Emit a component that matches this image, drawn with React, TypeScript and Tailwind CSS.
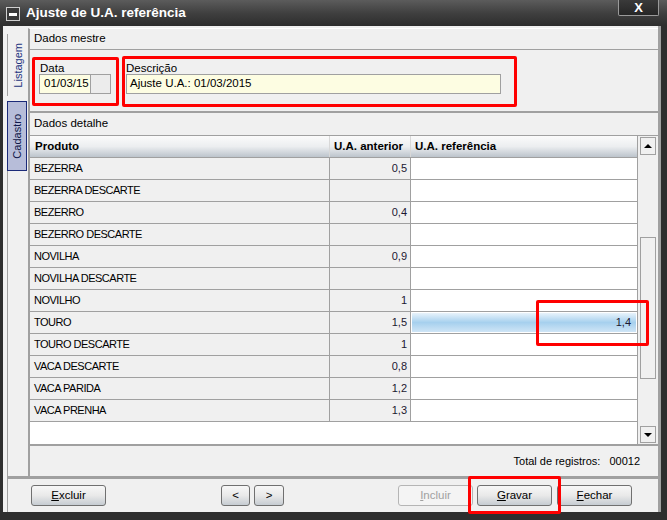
import React from 'react';

type Row = { produto: string; anterior: string; referencia: string };

const rows: Row[] = [
  { produto: 'BEZERRA', anterior: '0,5', referencia: '' },
  { produto: 'BEZERRA DESCARTE', anterior: '', referencia: '' },
  { produto: 'BEZERRO', anterior: '0,4', referencia: '' },
  { produto: 'BEZERRO DESCARTE', anterior: '', referencia: '' },
  { produto: 'NOVILHA', anterior: '0,9', referencia: '' },
  { produto: 'NOVILHA DESCARTE', anterior: '', referencia: '' },
  { produto: 'NOVILHO', anterior: '1', referencia: '' },
  { produto: 'TOURO', anterior: '1,5', referencia: '1,4' },
  { produto: 'TOURO DESCARTE', anterior: '1', referencia: '' },
  { produto: 'VACA DESCARTE', anterior: '0,8', referencia: '' },
  { produto: 'VACA PARIDA', anterior: '1,2', referencia: '' },
  { produto: 'VACA PRENHA', anterior: '1,3', referencia: '' },
];

const Btn = ({ label, u, rest, width, disabled, className }: { label?: string; u?: string; rest?: string; width: string; disabled?: boolean; className?: string }) => (
  <div
    className={`h-[21px] ${width} rounded-[3px] border flex items-center justify-center text-[11.5px] ${
      disabled
        ? 'border-[#b5b5b5] bg-[#f4f4f4] text-[#a0a0a0]'
        : 'border-[#707070] bg-gradient-to-b from-[#f7f7f7] via-[#e9e9e9] to-[#c6ccd2] text-black'
    } ${className ?? ''}`}
  >
    {label ?? (
      <span>
        <span className="underline">{u}</span>
        {rest}
      </span>
    )}
  </div>
);

export default function App() {
  return (
    <div className="relative w-[667px] h-[520px] bg-[#2e2e2e] flex flex-col overflow-hidden font-['Liberation_Sans',Arial,sans-serif] text-black">
      {/* title bar */}
      <div className="h-[26px] shrink-0 flex items-start bg-gradient-to-b from-[#5c5c5c] via-[#404040] to-[#2d2d2d]">
        <div className="ml-[6px] mt-[7px] w-[14px] h-[14px] border border-[#cfcfcf] bg-[#3a3a3a] flex items-center justify-center">
          <div className="w-[8px] h-[3px] bg-white" />
        </div>
        <span className="ml-[6px] mt-[4px] text-[13.5px] font-bold text-white leading-[18px]">Ajuste de U.A. referência</span>
        <div className="ml-auto mr-[8px] w-[41px] h-[16px] border border-t-0 border-[#9a9a9a] bg-gradient-to-b from-[#3a3a3a] to-[#262626] flex items-center justify-center rounded-b-[2px]">
          <span className="text-white font-bold text-[13px] leading-none">X</span>
        </div>
      </div>

      {/* client */}
      <div className="flex-1 ml-[3px] mr-[6px] mb-[8px] flex flex-col bg-[#f0f0f0] border-r-[3px] border-[#a0a0a0]">
        <div className="flex flex-1 min-h-0">
          {/* tab strip */}
          <div className="w-[25px] shrink-0 flex flex-col items-stretch pl-[4px] pt-[8px]">
            <div className="h-[62px] border-l border-[#a0a0a0] flex items-center justify-center">
              <span className="[writing-mode:vertical-rl] rotate-180 text-[11px] text-[#233480]">Listagem</span>
            </div>
            <div className="mt-[5px] h-[70px] w-[20px] bg-[#b7bdd9] border border-[#1b2a78] flex items-center justify-center">
              <span className="[writing-mode:vertical-rl] rotate-180 text-[11px] text-[#10184a]">Cadastro</span>
            </div>
            <div className="flex-1 border-l border-[#a0a0a0]" />
          </div>

          {/* content panel */}
          <div className="flex-1 mt-[2px] flex flex-col border-l-2 border-t border-[#a0a0a0] border-t-white min-w-0">
            <div className="h-[21px] shrink-0 pl-[4px] flex items-center text-[11.5px] border-b border-[#a0a0a0]">Dados mestre</div>

            <div className="h-[63px] shrink-0 flex items-start border-b-2 border-[#a0a0a0] pt-[11px]">
              <div className="ml-[9px] flex flex-col">
                <span className="text-[11.5px] leading-[14px] ml-[1px]">Data</span>
                <div className="flex mt-[-1px]">
                  <div className="w-[52px] h-[20px] border border-[#a0a0a0] bg-[#fdfde2] flex items-center pl-[4px] text-[11.5px]">01/03/15</div>
                  <div className="w-[20px] h-[20px] border border-l-0 border-[#a0a0a0] bg-[#ececec]" />
                </div>
              </div>
              <div className="ml-[15px] flex flex-col">
                <span className="text-[11.5px] leading-[14px]">Descrição</span>
                <div className="mt-[-1px] w-[375px] h-[20px] border border-[#a0a0a0] bg-[#fdfde2] flex items-center pl-[3px] text-[11.5px]">Ajuste U.A.: 01/03/2015</div>
              </div>
            </div>

            <div className="h-[22px] shrink-0 pl-[4px] flex items-center text-[11.5px]">Dados detalhe</div>

            {/* grid */}
            <div className="h-[311px] shrink-0 flex border-t border-b-2 border-[#a0a0a0] bg-white">
              <div className="w-[607px] flex flex-col">
                <div className="h-[22px] flex border-b border-[#a0a0a0] bg-gradient-to-b from-[#fbfbfb] via-[#eceef0] to-[#bcc4cc] text-[11.5px] font-bold">
                  <div className="w-[300px] pl-[5px] flex items-center border-r border-[#d8d8d8]">Produto</div>
                  <div className="w-[81px] pl-[4px] flex items-center border-r border-[#d8d8d8]">U.A. anterior</div>
                  <div className="flex-1 pl-[4px] flex items-center">U.A. referência</div>
                </div>
                {rows.map((r) => (
                  <div key={r.produto} className="h-[22px] flex border-b border-[#a0a0a0] text-[11px]">
                    <div className="w-[300px] pl-[4px] flex items-center bg-[#f0f0f0] border-r border-[#a0a0a0] tracking-[-0.5px]">{r.produto}</div>
                    <div className="w-[81px] pr-[3px] flex items-center justify-end bg-[#f0f0f0] border-r border-[#a0a0a0] text-[#1c1830]">{r.anterior}</div>
                    <div className="flex-1 flex items-stretch bg-white">
                      {r.referencia ? (
                        <div className="flex-1 m-[1px] flex items-center justify-end pr-[5px] bg-gradient-to-b from-[#e8f3fb] via-[#a6d0ee] to-[#cfe5f6] text-[#1c1830]">{r.referencia}</div>
                      ) : null}
                    </div>
                  </div>
                ))}
                <div className="flex-1 bg-white" />
              </div>
              {/* scrollbar */}
              <div className="flex-1 bg-[#f0f0f0] border-l border-[#a0a0a0] flex flex-col items-center pt-[1px] pb-[1px]">
                <div className="w-[16px] h-[18px] border border-[#a0a0a0] flex items-center justify-center">
                  <div className="w-0 h-0 border-l-[4px] border-r-[4px] border-b-[4px] border-l-transparent border-r-transparent border-b-black" />
                </div>
                <div className="mt-[82px] w-[16px] h-[142px] border border-[#a0a0a0]" />
                <div className="flex-1" />
                <div className="w-[16px] h-[17px] border border-[#a0a0a0] flex items-center justify-center">
                  <div className="w-0 h-0 border-l-[4px] border-r-[4px] border-t-[4px] border-l-transparent border-r-transparent border-t-black" />
                </div>
              </div>
            </div>

            <div className="flex-1 flex items-center justify-end pr-[18px] text-[11px]">
              <span>Total de registros:</span>
              <span className="ml-[9px]">00012</span>
            </div>
          </div>
        </div>

        {/* button bar */}
        <div className="h-[36px] shrink-0 border-t-[3px] border-[#a0a0a0] ml-[4px] border-l border-l-[#a0a0a0] flex items-center">
          <Btn u="E" rest="xcluir" width="w-[75px]" className="ml-[23px]" />
          <Btn label="<" width="w-[29px]" className="ml-[115px]" />
          <Btn label=">" width="w-[30px]" className="ml-[4px]" />
          <Btn u="I" rest="ncluir" width="w-[75px]" className="ml-[114px]" disabled />
          <Btn u="G" rest="ravar" width="w-[75px]" className="ml-[4px]" />
          <Btn u="F" rest="echar" width="w-[75px]" className="ml-[5px]" />
        </div>
      </div>

      {/* annotation boxes */}
      <div className="absolute left-[32px] top-[57px] w-[87px] h-[49px] border-[3px] border-[#ff0000] rounded-[2px]" />
      <div className="absolute left-[122px] top-[56px] w-[395px] h-[51px] border-[3px] border-[#ff0000] rounded-[2px]" />
      <div className="absolute left-[536px] top-[300px] w-[113px] h-[46px] border-[3px] border-[#ff0000] rounded-[2px]" />
      <div className="absolute left-[468px] top-[476px] w-[93px] h-[38px] border-[3px] border-[#ff0000] rounded-[2px]" />
    </div>
  );
}
